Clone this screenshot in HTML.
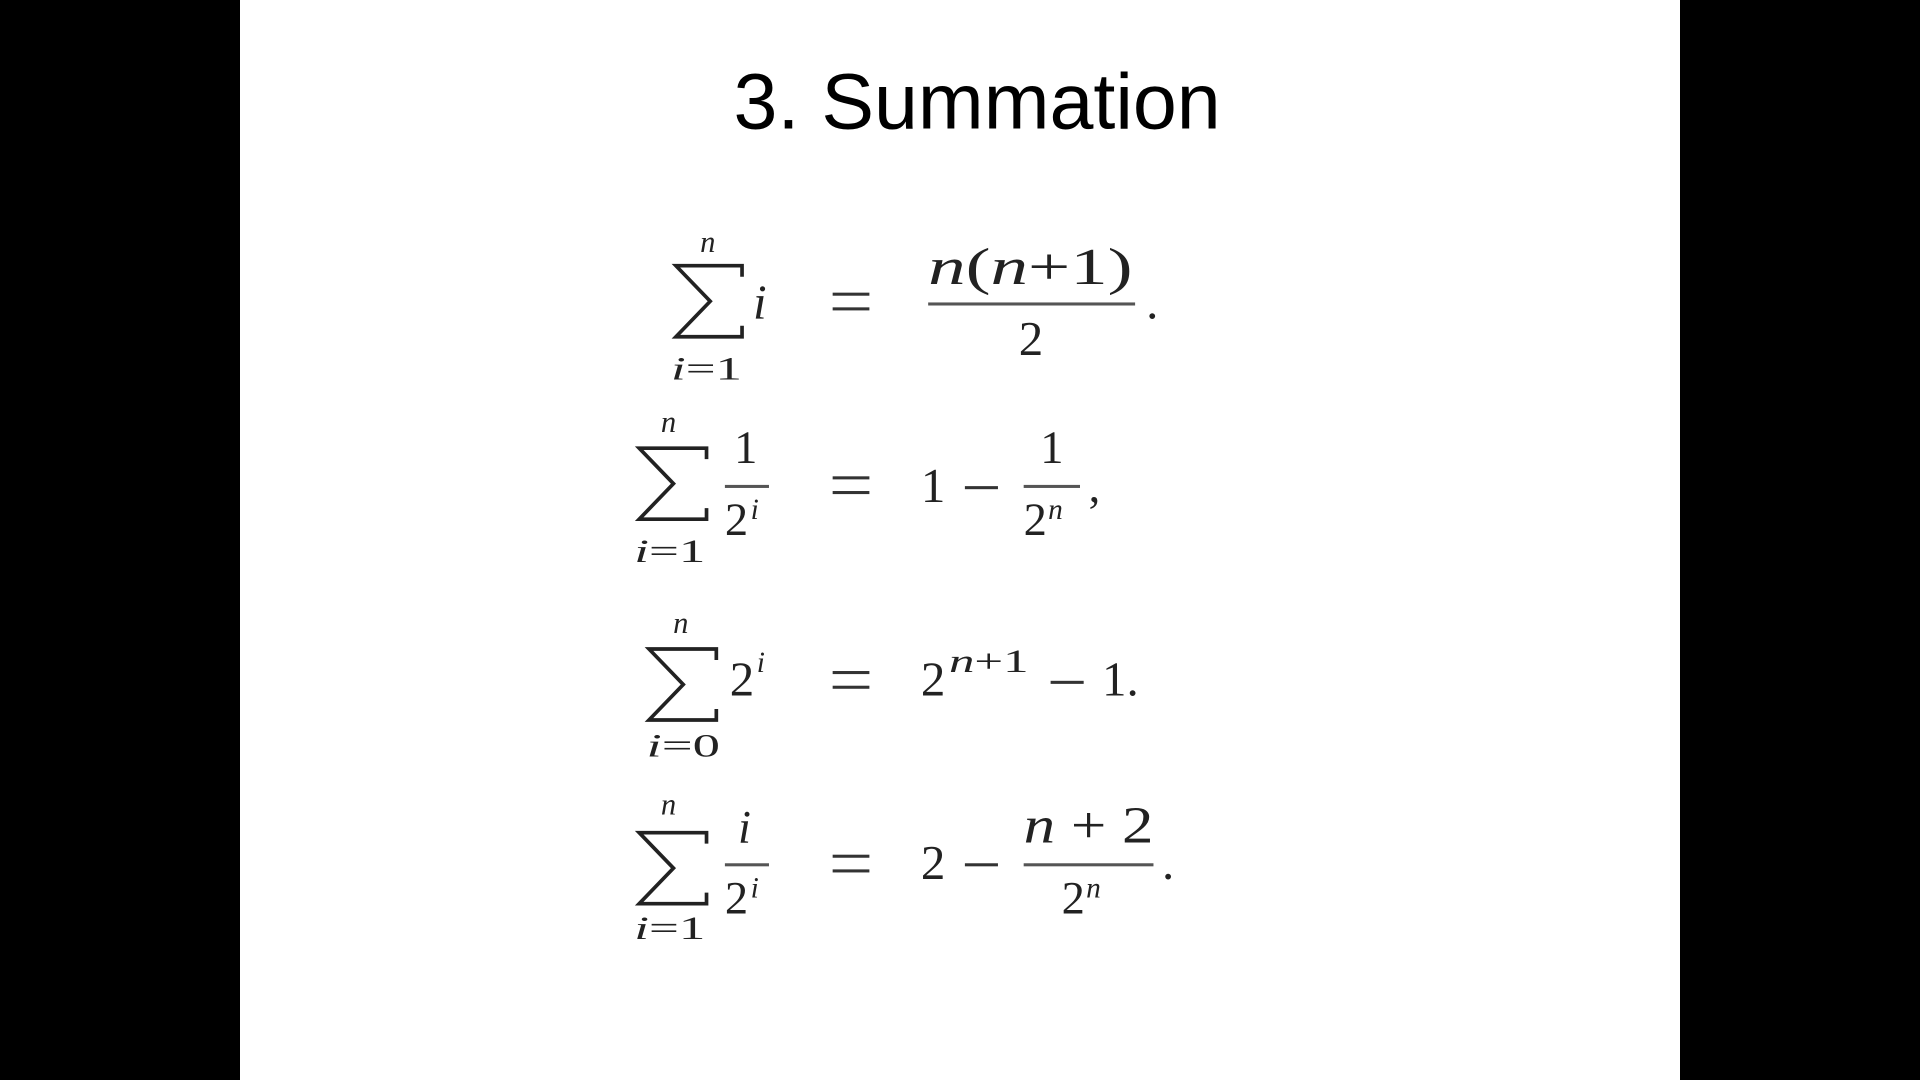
<!DOCTYPE html>
<html><head><meta charset="utf-8"><style>
html,body{margin:0;padding:0;background:#000;width:1920px;height:1080px;overflow:hidden}
svg{display:block}
.m{font-family:"Liberation Serif",serif;fill:#222}
.it{font-style:italic}
</style></head><body>
<svg width="1920" height="1080" viewBox="0 0 1568 882" preserveAspectRatio="none">
<rect x="0" y="0" width="1568" height="882" fill="#000"/>
<rect x="196" y="0" width="1176" height="882" fill="#fff"/>
<text x="798" y="105" text-anchor="middle" font-family="Liberation Sans, sans-serif" font-size="64.5" fill="#000">3. Summation</text>
<g fill="#333">
<rect x="680" y="239" width="30" height="2.5"/><rect x="680" y="251" width="30" height="2.5"/>
<rect x="680" y="389" width="30" height="2.5"/><rect x="680" y="401" width="30" height="2.5"/>
<rect x="680" y="548" width="30" height="2.5"/><rect x="680" y="560" width="30" height="2.5"/>
<rect x="680" y="698" width="30" height="2.5"/><rect x="680" y="710" width="30" height="2.5"/>
<rect x="788" y="397" width="27" height="2.5"/>
<rect x="858" y="556" width="27" height="2.5"/>
<rect x="788" y="705" width="27" height="2.5"/>
</g>
<g class="m" stroke="none">
<!-- Row 1 -->
<text x="578" y="206" text-anchor="middle" font-size="25" class="m it">n</text>
<path d="M606 226 L606 217 L552 217 L580 246 L552 275 L606 275 L606 266" fill="none" stroke="#222" stroke-width="3"/>
<text x="548" y="310" font-size="27" class="m" textLength="58" lengthAdjust="spacingAndGlyphs"><tspan font-style="italic">i</tspan>=1</text>
<text x="615" y="260" font-size="40" class="m it">i</text>
<text x="758" y="232" font-size="42" class="m" textLength="167" lengthAdjust="spacingAndGlyphs"><tspan font-style="italic">n</tspan>(<tspan font-style="italic">n</tspan>+1)</text>
<rect x="758" y="247" width="169" height="2.5" fill="#555"/>
<text x="842" y="290" text-anchor="middle" font-size="40" class="m">2</text>
<text x="936" y="260" font-size="40" class="m">.</text>
<!-- Row 2 -->
<text x="546" y="353" text-anchor="middle" font-size="25" class="m it">n</text>
<path d="M577 375 L577 366 L522 366 L550 395 L522 424 L577 424 L577 415" fill="none" stroke="#222" stroke-width="3"/>
<text x="518" y="459" font-size="27" class="m" textLength="58" lengthAdjust="spacingAndGlyphs"><tspan font-style="italic">i</tspan>=1</text>
<text x="609" y="378" text-anchor="middle" font-size="38" class="m">1</text>
<rect x="592" y="396" width="36" height="2.5" fill="#555"/>
<text x="592" y="437" font-size="38" class="m">2</text>
<text x="613" y="424" font-size="24" class="m it">i</text>
<text x="752" y="410" font-size="40" class="m">1</text>
<text x="859" y="378" text-anchor="middle" font-size="38" class="m">1</text>
<rect x="836" y="396" width="46" height="2.5" fill="#555"/>
<text x="836" y="437" font-size="38" class="m">2</text>
<text x="856" y="424" font-size="24" class="m it">n</text>
<text x="889" y="410" font-size="38" class="m">,</text>
<!-- Row 3 -->
<text x="556" y="517" text-anchor="middle" font-size="25" class="m it">n</text>
<path d="M585 539 L585 530 L530 530 L558 559 L530 588 L585 588 L585 579" fill="none" stroke="#222" stroke-width="3"/>
<text x="528" y="618" font-size="27" class="m" textLength="60" lengthAdjust="spacingAndGlyphs"><tspan font-style="italic">i</tspan>=0</text>
<text x="596" y="568" font-size="40" class="m">2</text>
<text x="618" y="549" font-size="24" class="m it">i</text>
<text x="752" y="568" font-size="40" class="m">2</text>
<text x="775" y="549" font-size="27" class="m" textLength="65" lengthAdjust="spacingAndGlyphs"><tspan font-style="italic">n</tspan>+1</text>
<text x="900" y="568" font-size="40" class="m">1.</text>
<!-- Row 4 -->
<text x="546" y="665" text-anchor="middle" font-size="25" class="m it">n</text>
<path d="M577 689 L577 680 L522 680 L550 709 L522 738 L577 738 L577 729" fill="none" stroke="#222" stroke-width="3"/>
<text x="518" y="767" font-size="27" class="m" textLength="58" lengthAdjust="spacingAndGlyphs"><tspan font-style="italic">i</tspan>=1</text>
<text x="608" y="688" text-anchor="middle" font-size="38" class="m it">i</text>
<rect x="592" y="705" width="36" height="2.5" fill="#555"/>
<text x="592" y="746" font-size="38" class="m">2</text>
<text x="613" y="733" font-size="24" class="m it">i</text>
<text x="752" y="718" font-size="40" class="m">2</text>
<text x="836" y="688" font-size="42" class="m" textLength="106" lengthAdjust="spacingAndGlyphs"><tspan font-style="italic">n</tspan> + 2</text>
<rect x="836" y="705" width="106" height="2.5" fill="#555"/>
<text x="867" y="746" font-size="38" class="m">2</text>
<text x="887" y="733" font-size="24" class="m it">n</text>
<text x="949" y="718" font-size="40" class="m">.</text>
</g>
</svg>
</body></html>
